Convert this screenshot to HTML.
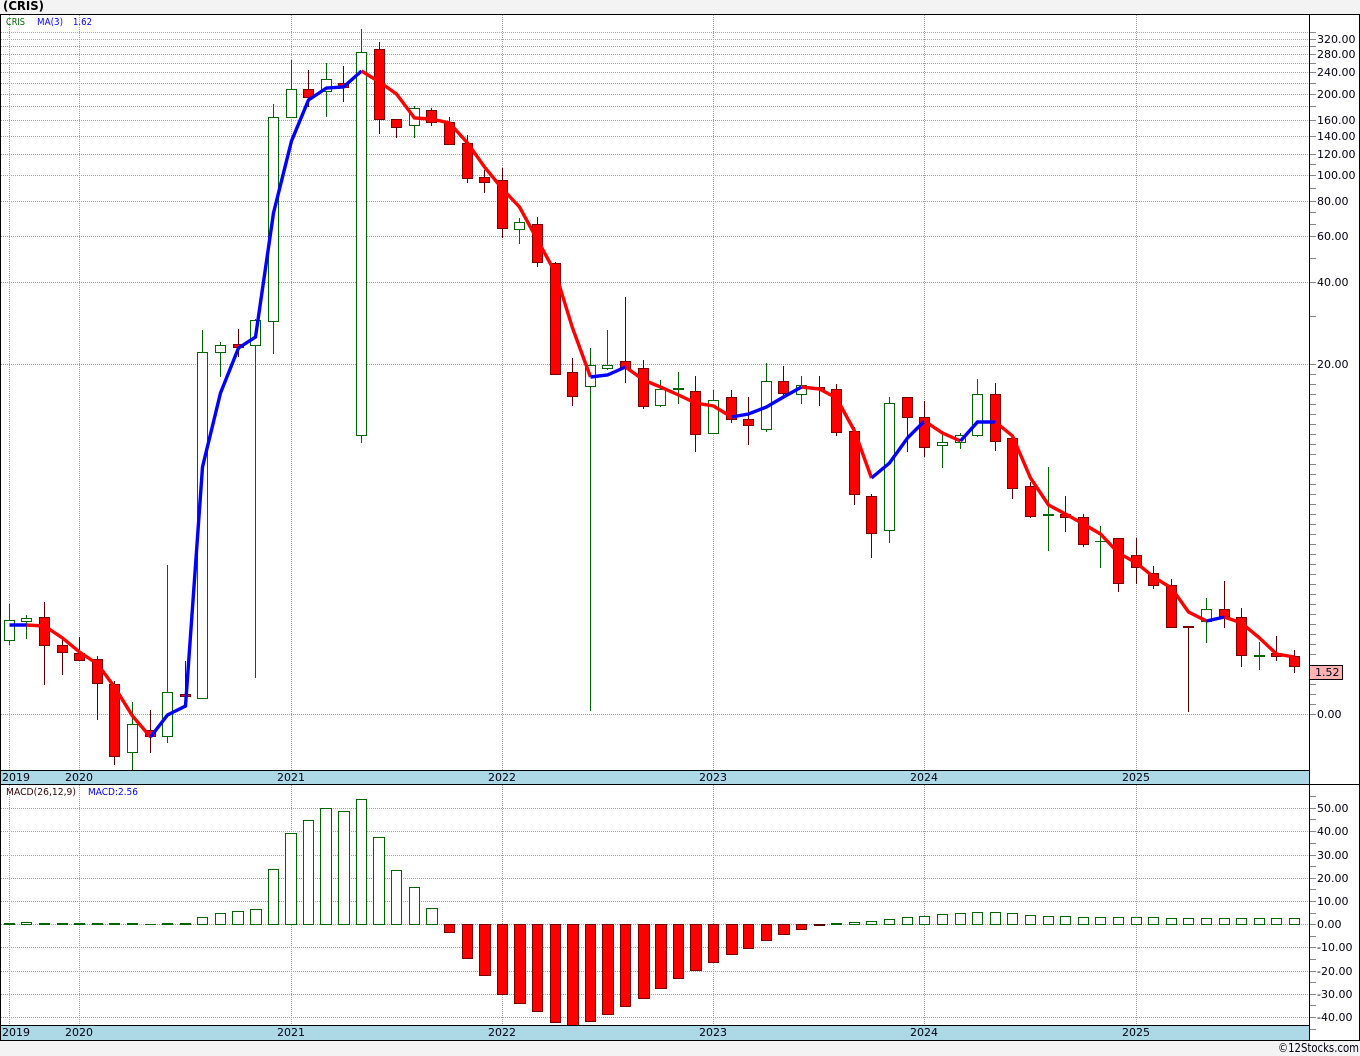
<!DOCTYPE html>
<html><head><meta charset="utf-8"><title>CRIS</title>
<style>html,body{margin:0;padding:0;background:#f3f3f3;width:1360px;height:1056px;overflow:hidden}svg{display:block}text{font-family:"DejaVu Sans","Liberation Sans",sans-serif;font-size:11px;fill:#001}</style></head>
<body>
<svg width="1360" height="1056" viewBox="0 0 1360 1056" xmlns="http://www.w3.org/2000/svg">
<rect x="0" y="0" width="1360" height="1056" fill="#f3f3f3"/>
<rect x="0" y="14" width="1360" height="1027" fill="#fff"/>
<g shape-rendering="crispEdges">
<g stroke="#a4a4a4" stroke-dasharray="1 1" fill="none">
<path d="M1 32.5H1309M1 39.5H1309M1 46.5H1309M1 54.5H1309M1 63.5H1309M1 72.5H1309M1 83.5H1309M1 94.5H1309M1 106.5H1309M1 120.5H1309M1 136.5H1309M1 154.5H1309M1 175.5H1309M1 201.5H1309M1 236.5H1309M1 282.5H1309M1 364.5H1309M1 714.5H1309"/>
<path d="M1 808.5H1309M1 831.5H1309M1 855.5H1309M1 878.5H1309M1 901.5H1309M1 924.5H1309M1 947.5H1309M1 971.5H1309M1 994.5H1309M1 1017.5H1309"/>
<path d="M9.5 15V770M79.5 15V770M291.5 15V770M502.5 15V770M713.5 15V770M924.5 15V770M1136.5 15V770M9.5 785V1025M79.5 785V1025M291.5 785V1025M502.5 785V1025M713.5 785V1025M924.5 785V1025M1136.5 785V1025"/>
</g>
<path stroke="#888" fill="none" d="M1310 32.5h6M1310 39.5h6M1310 46.5h6M1310 54.5h6M1310 63.5h6M1310 72.5h6M1310 83.5h6M1310 94.5h6M1310 106.5h6M1310 120.5h6M1310 136.5h6M1310 154.5h6M1310 164.5h6M1310 175.5h6M1310 188.5h6M1310 201.5h6M1310 212.5h6M1310 224.5h6M1310 236.5h6M1310 258.5h6M1310 282.5h6M1310 316.5h6M1310 364.5h6M1310 374.5h6M1310 384.5h6M1310 394.5h6M1310 404.5h6M1310 414.5h6M1310 424.5h6M1310 434.5h6M1310 444.5h6M1310 454.5h6M1310 464.5h6M1310 474.5h6M1310 484.5h6M1310 494.5h6M1310 504.5h6M1310 514.5h6M1310 524.5h6M1310 534.5h6M1310 544.5h6M1310 554.5h6M1310 564.5h6M1310 574.5h6M1310 584.5h6M1310 594.5h6M1310 604.5h6M1310 614.5h6M1310 624.5h6M1310 634.5h6M1310 644.5h6M1310 654.5h6M1310 684.5h6M1310 694.5h6M1310 704.5h6M1310 714.5h6M1310 796.5h6M1310 808.5h6M1310 819.5h6M1310 831.5h6M1310 843.5h6M1310 855.5h6M1310 866.5h6M1310 878.5h6M1310 889.5h6M1310 901.5h6M1310 913.5h6M1310 924.5h6M1310 936.5h6M1310 947.5h6M1310 959.5h6M1310 971.5h6M1310 982.5h6M1310 994.5h6M1310 1005.5h6M1310 1017.5h6M1310 1029.5h6"/>

<path stroke="#006400" fill="none" d="M9.5 604V645M26.5 615V639M132.5 702V770M167.5 565V743M202.5 330V352M220.5 342V377M255.5 319V678M273.5 104V354M291.5 60V117M326.5 63V117M361.5 29V443M414.5 106V138M519.5 218V244M590.5 348V711M607.5 330V370M660.5 380V407M678.5 372V404M713.5 390V434M766.5 363V432M801.5 376V404M889.5 397V543M942.5 431V468M960.5 433V449M977.5 379V437M1048.5 467V551M1100.5 526V568M1206.5 598V643M1259.5 642V670M1095 541.5h11"/>
<path stroke="#5a0000" fill="none" d="M44.5 602V685M62.5 638V675M79.5 637V661M97.5 656V720M114.5 681V765M150.5 710V753M185.5 661V708M238.5 329V357M308.5 70V107M343.5 66V102M379.5 42V134M396.5 119V138M431.5 108V126M449.5 117V145M467.5 135V183M484.5 170V193M502.5 168V238M537.5 217V267M555.5 262V375M572.5 358V406M625.5 297V383M643.5 360V409M695.5 376V452M731.5 390V423M748.5 397V445M783.5 366V395M819.5 376V406M836.5 384V436M854.5 427V505M871.5 494V558M907.5 397V452M924.5 401V457M995.5 383V451M1012.5 437V499M1030.5 482V518M1065.5 496V532M1083.5 514V547M1118.5 538V592M1136.5 538V584M1153.5 566V589M1171.5 579V627M1188.5 627V712M1224.5 581V628M1241.5 608V667M1276.5 636V661M1294.5 650V673"/>

<g fill="#fff" stroke="#006400">
<rect x="4.5" y="620.5" width="10" height="20"/>
<rect x="21.5" y="618.5" width="10" height="3"/>
<rect x="127.5" y="724.5" width="10" height="28"/>
<rect x="162.5" y="692.5" width="10" height="44"/>
<rect x="197.5" y="352.5" width="10" height="346"/>
<rect x="215.5" y="345.5" width="10" height="7"/>
<rect x="250.5" y="320.5" width="10" height="25"/>
<rect x="268.5" y="117.5" width="10" height="204"/>
<rect x="286.5" y="89.5" width="10" height="28"/>
<rect x="321.5" y="79.5" width="10" height="12"/>
<rect x="356.5" y="52.5" width="10" height="383"/>
<rect x="409.5" y="108.5" width="10" height="17"/>
<rect x="514.5" y="222.5" width="10" height="7"/>
<rect x="585.5" y="365.5" width="10" height="21"/>
<rect x="602.5" y="365.5" width="10" height="3"/>
<rect x="655.5" y="389.5" width="10" height="16"/>
<rect x="673.5" y="388.5" width="10" height="1"/>
<rect x="708.5" y="400.5" width="10" height="33"/>
<rect x="761.5" y="381.5" width="10" height="48"/>
<rect x="796.5" y="385.5" width="10" height="9"/>
<rect x="884.5" y="403.5" width="10" height="127"/>
<rect x="937.5" y="442.5" width="10" height="3"/>
<rect x="955.5" y="435.5" width="10" height="7"/>
<rect x="972.5" y="394.5" width="10" height="41"/>
<rect x="1043.5" y="514.5" width="10" height="1"/>
<rect x="1201.5" y="609.5" width="10" height="12"/>
<rect x="1254.5" y="655.5" width="10" height="1"/>
</g>
<g fill="#f00" stroke="#7a0000">
<rect x="39.5" y="617.5" width="10" height="28"/>
<rect x="57.5" y="645.5" width="10" height="7"/>
<rect x="74.5" y="653.5" width="10" height="7"/>
<rect x="92.5" y="659.5" width="10" height="24"/>
<rect x="109.5" y="684.5" width="10" height="72"/>
<rect x="145.5" y="730.5" width="10" height="6"/>
<rect x="180.5" y="694.5" width="10" height="2"/>
<rect x="233.5" y="344.5" width="10" height="3"/>
<rect x="303.5" y="89.5" width="10" height="8"/>
<rect x="338.5" y="83.5" width="10" height="4"/>
<rect x="374.5" y="49.5" width="10" height="70"/>
<rect x="391.5" y="119.5" width="10" height="8"/>
<rect x="426.5" y="110.5" width="10" height="12"/>
<rect x="444.5" y="122.5" width="10" height="22"/>
<rect x="462.5" y="143.5" width="10" height="35"/>
<rect x="479.5" y="177.5" width="10" height="5"/>
<rect x="497.5" y="180.5" width="10" height="48"/>
<rect x="532.5" y="224.5" width="10" height="38"/>
<rect x="550.5" y="263.5" width="10" height="111"/>
<rect x="567.5" y="372.5" width="10" height="24"/>
<rect x="620.5" y="361.5" width="10" height="7"/>
<rect x="638.5" y="368.5" width="10" height="38"/>
<rect x="690.5" y="391.5" width="10" height="43"/>
<rect x="726.5" y="397.5" width="10" height="22"/>
<rect x="743.5" y="419.5" width="10" height="6"/>
<rect x="778.5" y="381.5" width="10" height="12"/>
<rect x="814.5" y="387.5" width="10" height="2"/>
<rect x="831.5" y="389.5" width="10" height="43"/>
<rect x="849.5" y="431.5" width="10" height="63"/>
<rect x="866.5" y="496.5" width="10" height="37"/>
<rect x="902.5" y="397.5" width="10" height="20"/>
<rect x="919.5" y="417.5" width="10" height="30"/>
<rect x="990.5" y="394.5" width="10" height="47"/>
<rect x="1007.5" y="438.5" width="10" height="50"/>
<rect x="1025.5" y="486.5" width="10" height="30"/>
<rect x="1060.5" y="514.5" width="10" height="3"/>
<rect x="1078.5" y="517.5" width="10" height="27"/>
<rect x="1113.5" y="538.5" width="10" height="45"/>
<rect x="1131.5" y="555.5" width="10" height="12"/>
<rect x="1148.5" y="573.5" width="10" height="12"/>
<rect x="1166.5" y="585.5" width="10" height="42"/>
<rect x="1183.5" y="626.5" width="10" height="1"/>
<rect x="1219.5" y="609.5" width="10" height="7"/>
<rect x="1236.5" y="617.5" width="10" height="38"/>
<rect x="1271.5" y="653.5" width="10" height="3"/>
<rect x="1289.5" y="656.5" width="10" height="10"/>
</g>

<g fill="#fff" stroke="#006400">
<rect x="4.5" y="923.5" width="10" height="1"/>
<rect x="21.5" y="922.5" width="10" height="2"/>
<rect x="39.5" y="923.5" width="10" height="1"/>
<rect x="57.5" y="923.5" width="10" height="1"/>
<rect x="74.5" y="923.5" width="10" height="1"/>
<rect x="92.5" y="923.5" width="10" height="1"/>
<rect x="109.5" y="923.5" width="10" height="1"/>
<rect x="127.5" y="923.5" width="10" height="1"/>
<rect x="162.5" y="923.5" width="10" height="1"/>
<rect x="180.5" y="923.5" width="10" height="1"/>
<rect x="197.5" y="917.5" width="10" height="7"/>
<rect x="215.5" y="913.5" width="10" height="11"/>
<rect x="232.5" y="911.5" width="11" height="13"/>
<rect x="250.5" y="909.5" width="11" height="15"/>
<rect x="268.5" y="869.5" width="10" height="55"/>
<rect x="285.5" y="833.5" width="11" height="91"/>
<rect x="303.5" y="820.5" width="10" height="104"/>
<rect x="320.5" y="808.5" width="11" height="116"/>
<rect x="338.5" y="811.5" width="11" height="113"/>
<rect x="356.5" y="799.5" width="10" height="125"/>
<rect x="373.5" y="837.5" width="11" height="87"/>
<rect x="391.5" y="870.5" width="10" height="54"/>
<rect x="409.5" y="887.5" width="10" height="37"/>
<rect x="426.5" y="908.5" width="11" height="16"/>
<rect x="831.5" y="923.5" width="10" height="1"/>
<rect x="849.5" y="922.5" width="10" height="2"/>
<rect x="866.5" y="921.5" width="10" height="3"/>
<rect x="884.5" y="919.5" width="10" height="5"/>
<rect x="902.5" y="917.5" width="10" height="7"/>
<rect x="919.5" y="916.5" width="10" height="8"/>
<rect x="937.5" y="914.5" width="10" height="10"/>
<rect x="955.5" y="913.5" width="10" height="11"/>
<rect x="972.5" y="912.5" width="10" height="12"/>
<rect x="990.5" y="912.5" width="10" height="12"/>
<rect x="1007.5" y="913.5" width="10" height="11"/>
<rect x="1025.5" y="915.5" width="10" height="9"/>
<rect x="1043.5" y="916.5" width="10" height="8"/>
<rect x="1060.5" y="916.5" width="10" height="8"/>
<rect x="1078.5" y="917.5" width="10" height="7"/>
<rect x="1095.5" y="917.5" width="10" height="7"/>
<rect x="1113.5" y="917.5" width="10" height="7"/>
<rect x="1131.5" y="917.5" width="10" height="7"/>
<rect x="1148.5" y="917.5" width="10" height="7"/>
<rect x="1166.5" y="918.5" width="10" height="6"/>
<rect x="1183.5" y="918.5" width="10" height="6"/>
<rect x="1201.5" y="918.5" width="10" height="6"/>
<rect x="1219.5" y="918.5" width="10" height="6"/>
<rect x="1236.5" y="918.5" width="10" height="6"/>
<rect x="1254.5" y="918.5" width="10" height="6"/>
<rect x="1271.5" y="918.5" width="10" height="6"/>
<rect x="1289.5" y="918.5" width="10" height="6"/>
</g>
<path stroke="#006400" fill="none" d="M145 924.5h11"/>
<g fill="#f00" stroke="#7a0000">
<rect x="444.5" y="924.5" width="10" height="8"/>
<rect x="462.5" y="924.5" width="10" height="34"/>
<rect x="479.5" y="924.5" width="11" height="51"/>
<rect x="497.5" y="924.5" width="10" height="70"/>
<rect x="514.5" y="924.5" width="11" height="79"/>
<rect x="532.5" y="924.5" width="10" height="87"/>
<rect x="550.5" y="924.5" width="10" height="98"/>
<rect x="567.5" y="924.5" width="11" height="101"/>
<rect x="585.5" y="924.5" width="10" height="97"/>
<rect x="602.5" y="924.5" width="11" height="90"/>
<rect x="620.5" y="924.5" width="10" height="82"/>
<rect x="638.5" y="924.5" width="11" height="74"/>
<rect x="655.5" y="924.5" width="11" height="64"/>
<rect x="673.5" y="924.5" width="10" height="54"/>
<rect x="690.5" y="924.5" width="11" height="46"/>
<rect x="708.5" y="924.5" width="10" height="38"/>
<rect x="726.5" y="924.5" width="11" height="30"/>
<rect x="743.5" y="924.5" width="10" height="24"/>
<rect x="761.5" y="924.5" width="10" height="16"/>
<rect x="778.5" y="924.5" width="11" height="10"/>
<rect x="796.5" y="924.5" width="10" height="5"/>
</g>
<rect x="814.5" y="924.5" width="10" height="1" fill="#5a0000" stroke="#5a0000"/>

<rect x="1" y="771" width="1308" height="13" fill="#add8e6"/>
<rect x="1" y="1026" width="1308" height="14" fill="#add8e6"/>
<path stroke="#000" fill="none" d="M0 14.5H1360M0.5 14V1041M1309.5 14V1040M1359.5 14V1041M0 770.5H1310M0 784.5H1360M0 1025.5H1310M0 1040.5H1360"/>
<rect x="1309.5" y="665.5" width="33" height="14" fill="#ffb3b3" stroke="#000"/>
</g>

<g fill="none" stroke-width="3.4" stroke-linejoin="miter">
<polyline stroke="#f00" points="26.5,625 44.5,626 62.5,638 79.5,652 97.5,664 114.5,687 132.5,716 150.5,737"/>
<polyline stroke="#00f" points="9.5,625 26.5,625"/>
<polyline stroke="#00f" points="150.5,737 167.5,715 185.5,706 202.5,467 220.5,393 238.5,348 255.5,337 273.5,213 291.5,141 308.5,100 326.5,88 343.5,87 361.5,71"/>
<polyline stroke="#f00" points="361.5,71 379.5,82 396.5,94 414.5,118 431.5,119 449.5,123 467.5,143 484.5,167 502.5,189 519.5,207 537.5,240 555.5,273 572.5,328 590.5,377"/>
<polyline stroke="#00f" points="590.5,377 607.5,375 625.5,367"/>
<polyline stroke="#f00" points="625.5,367 643.5,380 660.5,387 678.5,395 695.5,403 713.5,406 731.5,417"/>
<polyline stroke="#00f" points="731.5,417 748.5,414 766.5,407 783.5,397 801.5,387"/>
<polyline stroke="#f00" points="801.5,387 819.5,389 836.5,398 854.5,431 871.5,478"/>
<polyline stroke="#00f" points="871.5,478 889.5,463 907.5,438 924.5,421"/>
<polyline stroke="#f00" points="924.5,421 942.5,433 960.5,441"/>
<polyline stroke="#00f" points="960.5,441 977.5,422 995.5,422"/>
<polyline stroke="#f00" points="995.5,422 1012.5,436 1030.5,478 1048.5,505 1065.5,514 1083.5,524 1100.5,534 1118.5,553 1136.5,563 1153.5,577 1171.5,588 1188.5,612 1206.5,621"/>
<polyline stroke="#00f" points="1206.5,621 1224.5,617"/>
<polyline stroke="#f00" points="1224.5,617 1241.5,623 1259.5,638 1276.5,654 1294.5,657"/>
</g>

<text x="3" y="10" font-weight="700" style="font-size:12px;fill:#000" textLength="41" lengthAdjust="spacingAndGlyphs">(CRIS)</text>
<text x="6" y="25" style="font-size:10px;fill:#060" textLength="19" lengthAdjust="spacingAndGlyphs">CRIS</text>
<text x="37" y="25" style="font-size:10px;fill:#00f" textLength="26" lengthAdjust="spacingAndGlyphs">MA(3)</text>
<text x="73" y="25" style="font-size:10px;fill:#00f" textLength="19" lengthAdjust="spacingAndGlyphs">1.62</text>
<text x="6" y="795" style="font-size:10px;fill:#300" textLength="70" lengthAdjust="spacingAndGlyphs">MACD(26,12,9)</text>
<text x="88" y="795" style="font-size:10px;fill:#00f" textLength="50" lengthAdjust="spacingAndGlyphs">MACD:2.56</text>

<g>
<text x="1317" y="43">320.00</text>
<text x="1317" y="58">280.00</text>
<text x="1317" y="76">240.00</text>
<text x="1317" y="98">200.00</text>
<text x="1317" y="124">160.00</text>
<text x="1317" y="140">140.00</text>
<text x="1317" y="158">120.00</text>
<text x="1317" y="179">100.00</text>
<text x="1317" y="205">80.00</text>
<text x="1317" y="240">60.00</text>
<text x="1317" y="286">40.00</text>
<text x="1317" y="368">20.00</text>
<text x="1317" y="718">0.00</text>
<text x="1315" y="676">1.52</text>
<text x="1317" y="812">50.00</text>
<text x="1317" y="835">40.00</text>
<text x="1317" y="859">30.00</text>
<text x="1317" y="882">20.00</text>
<text x="1317" y="905">10.00</text>
<text x="1317" y="928">0.00</text>
<text x="1317" y="951">-10.00</text>
<text x="1317" y="975">-20.00</text>
<text x="1317" y="998">-30.00</text>
<text x="1317" y="1021">-40.00</text>
</g>
<g>
<text x="2" y="781">2019</text>
<text x="65" y="781">2020</text>
<text x="277" y="781">2021</text>
<text x="488" y="781">2022</text>
<text x="699" y="781">2023</text>
<text x="910" y="781">2024</text>
<text x="1122" y="781">2025</text>
<text x="2" y="1036">2019</text>
<text x="65" y="1036">2020</text>
<text x="277" y="1036">2021</text>
<text x="488" y="1036">2022</text>
<text x="699" y="1036">2023</text>
<text x="910" y="1036">2024</text>
<text x="1122" y="1036">2025</text>
</g>
<text x="1278" y="1052" style="font-size:12px" textLength="81" lengthAdjust="spacingAndGlyphs">©12Stocks.com</text>
</svg>
</body></html>
